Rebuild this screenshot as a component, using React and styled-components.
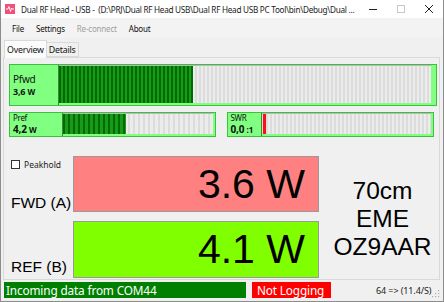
import React from "react";
import styled, { createGlobalStyle } from "styled-components";

const Global = createGlobalStyle`
  html, body { margin: 0; padding: 0; background: #f0f0f0; }
  #root { width: 444px; height: 302px; }
  * { box-sizing: border-box; }
`;

const UI = `"Noto Sans", "Open Sans", sans-serif`;
const ARIAL = `"Liberation Sans", Arial, sans-serif`;

const Window = styled.div`
  width: 444px;
  height: 302px;
  display: flex;
  flex-direction: column;
  background: #f0f0f0;
  border: 1px solid #8c8c8c;
  border-top: none;
  font-family: ${UI};
  overflow: hidden;
`;

const TitleBar = styled.div`
  height: 18px;
  flex: none;
  display: flex;
  align-items: center;
  background: #ffffff;
  padding-left: 4px;
`;

const AppIcon = styled.div`
  width: 10px;
  height: 10px;
  background: #f0507a;
  display: flex;
  align-items: center;
  justify-content: center;
  margin-right: 6px;
  flex: none;
`;

const Title = styled.div`
  flex: 1;
  min-width: 0;
  font-size: 8.2px;
  color: #1a1a1a;
  white-space: pre;
  overflow: hidden;
  letter-spacing: -0.28px;
`;

const Controls = styled.div`
  display: flex;
  align-items: center;
  flex: none;
`;

const Ctl = styled.div`
  width: 28px;
  height: 18px;
  display: flex;
  align-items: center;
  justify-content: center;
`;

const MenuBar = styled.div`
  height: 20px;
  flex: none;
  display: flex;
  align-items: center;
  background: #f3f3f3;
  padding-left: 5px;
`;

const MenuItem = styled.div`
  font-size: 8px;
  padding: 0 6px;
  color: ${(p) => (p.$disabled ? "#a0a0a0" : "#111")};
  letter-spacing: -0.2px;
`;

const Body = styled.div`
  flex: 1;
  display: flex;
  flex-direction: column;
  padding: 2px 2px 0 2px;
`;

const TabStrip = styled.div`
  display: flex;
  align-items: flex-end;
  height: 17px;
  padding-left: 1px;
  position: relative;
  z-index: 1;
`;

const Tab = styled.div`
  font-size: 8.8px;
  letter-spacing: -0.2px;
  color: #111;
  height: ${(p) => (p.$active ? "18px" : "15px")};
  padding: 0 2px;
  background: ${(p) => (p.$active ? "#fbfbfb" : "#f0f0f0")};
  border: 1px solid #d9d9d9;
  border-bottom: ${(p) => (p.$active ? "none" : "1px solid #d9d9d9")};
  margin-left: ${(p) => (p.$active ? "0" : "-1px")};
  display: flex;
  align-items: center;
  margin-bottom: ${(p) => (p.$active ? "-1px" : "0")};
`;

const TabPage = styled.div`
  height: 223px;
  border: 1px solid #d9d9d9;
  background: #f0f0f0;
  margin-right: 1px;
  padding: 6px 5px 0 5px;
  display: flex;
  flex-direction: column;
`;

const MeterFrame = styled.div`
  display: flex;
  height: ${(p) => p.$h}px;
  width: ${(p) => p.$w}px;
  background: #80ff80;
  border: 1px solid #3fbf3f;
`;

const MeterLabel = styled.div`
  width: ${(p) => p.$w}px;
  flex: none;
  display: flex;
  flex-direction: column;
  justify-content: center;
  padding-left: ${(p) => p.$pl || 3}px;
  font-family: ${UI};
  color: #111;
  border-right: 1px solid #3a8a3a;
`;

const LabelName = styled.div`
  font-size: ${(p) => p.$size}px;
  line-height: ${(p) => p.$lh}px;
  letter-spacing: -0.3px;
`;

const LabelValue = styled.div`
  font-size: ${(p) => p.$size}px;
  font-weight: bold;
  line-height: ${(p) => p.$lh}px;
  letter-spacing: -0.2px;
`;

const Unit = styled.span`
  font-size: 8px;
  font-weight: bold;
`;

const Bar = styled.div`
  flex: 1;
  display: flex;
  margin: 0 ${(p) => p.$mr}px ${(p) => p.$mb}px 0;
  border-top: 1px solid #b8b8b8;
  background: repeating-linear-gradient(
    to right,
    #dcdcdc 0,
    #dcdcdc ${(p) => p.$seg}px,
    #ececec ${(p) => p.$seg}px,
    #ececec ${(p) => p.$period}px
  );
`;

const Fill = styled.div`
  height: 100%;
  flex: none;
  background: repeating-linear-gradient(
    to right,
    #006d00 0,
    #006d00 ${(p) => p.$seg}px,
    #1a9a1a ${(p) => p.$seg}px,
    #1a9a1a ${(p) => p.$period}px
  );
`;

const Marker = styled.div`
  width: 3px;
  margin-left: 1px;
  height: 100%;
  background: #ff1010;
`;

const SmallRow = styled.div`
  display: flex;
  margin-top: 6px;
  gap: 11px;
`;

const Lower = styled.div`
  display: flex;
  margin-top: 19px;
`;

const Readings = styled.div`
  display: flex;
  flex-direction: column;
  gap: 9px;
`;

const ReadingRow = styled.div`
  display: flex;
  align-items: stretch;
`;

const LabelCell = styled.div`
  width: 64px;
  flex: none;
  display: flex;
  flex-direction: column;
  justify-content: ${(p) => (p.$top ? "space-between" : "flex-end")};
  padding-left: 2px;
`;

const Check = styled.label`
  display: flex;
  align-items: center;
  gap: 4px;
  font-size: 8.5px;
  color: #222;
  font-family: ${UI};
  margin-top: 3px;
`;

const Box = styled.span`
  width: 9px;
  height: 9px;
  border: 1px solid #333;
  background: #fff;
  flex: none;
`;

const ChannelName = styled.div`
  font-family: ${ARIAL};
  font-size: 15.5px;
  color: #000;
  margin-bottom: ${(p) => p.$mb}px;
  white-space: nowrap;
`;

const Display = styled.div`
  width: 246px;
  height: ${(p) => p.$h}px;
  background: ${(p) => p.$bg};
  border: 1px solid #9a9a9a;
  display: flex;
  align-items: center;
  justify-content: flex-end;
  padding-right: 13px;
  font-family: ${ARIAL};
  font-size: 41px;
  color: #000;
`;

const Callsign = styled.div`
  flex: 1;
  display: flex;
  flex-direction: column;
  align-items: center;
  justify-content: center;
  font-family: ${ARIAL};
  font-size: 24.5px;
  line-height: 28px;
  color: #000;
  padding-left: 12px;
  margin-top: 4px;
`;

const StatusBar = styled.div`
  height: 19px;
  flex: none;
  display: flex;
  align-items: center;
  padding: 1px 0 0 1px;
  gap: 6px;
  position: relative;
`;

const StatusPanel = styled.div`
  height: 16px;
  width: ${(p) => p.$w}px;
  flex: none;
  background: ${(p) => p.$bg};
  color: #fff;
  font-size: 11.8px;
  display: flex;
  align-items: center;
  padding-left: ${(p) => p.$pl}px;
  letter-spacing: -0.15px;
  white-space: nowrap;
`;

const Rate = styled.div`
  font-size: 9px;
  color: #222;
  margin-left: 39px;
  letter-spacing: -0.1px;
  white-space: nowrap;
  flex: none;
`;

const Grip = styled.svg`
  position: absolute;
  right: 1px;
  bottom: 1px;
`;

export default function App() {
  return (
    <>
      <Global />
      <Window>
        <TitleBar>
          <AppIcon>
            <svg width="8" height="8" viewBox="0 0 8 8">
              <path d="M0 4 L2 4 L3 1.5 L4.5 6.5 L5.5 3 L6 4 L8 4" stroke="#fff" strokeWidth="0.9" fill="none" />
            </svg>
          </AppIcon>
          <Title>{"Dual RF Head - USB -  (D:\\PRJ\\Dual RF Head USB\\Dual RF Head USB PC Tool\\bin\\Debug\\Dual ..."}</Title>
          <Controls>
            <Ctl>
              <svg width="10" height="10" viewBox="0 0 10 10"><path d="M1 5.5 H9" stroke="#222" strokeWidth="1" /></svg>
            </Ctl>
            <Ctl>
              <svg width="10" height="10" viewBox="0 0 10 10"><rect x="1.5" y="1.5" width="7" height="7" stroke="#c8c8c8" fill="none" /></svg>
            </Ctl>
            <Ctl>
              <svg width="10" height="10" viewBox="0 0 10 10"><path d="M1 1 L9 9 M9 1 L1 9" stroke="#222" strokeWidth="1" /></svg>
            </Ctl>
          </Controls>
        </TitleBar>
        <MenuBar>
          <MenuItem>File</MenuItem>
          <MenuItem>Settings</MenuItem>
          <MenuItem $disabled>Re-connect</MenuItem>
          <MenuItem>About</MenuItem>
        </MenuBar>
        <Body>
          <TabStrip>
            <Tab $active>Overview</Tab>
            <Tab>Details</Tab>
          </TabStrip>
          <TabPage>
            <MeterFrame $h={42} $w={428}>
              <MeterLabel $w={49} $pl={3}>
                <LabelName $size={10} $lh={13}>Pfwd</LabelName>
                <LabelValue $size={9} $lh={12}>3,6 <Unit>W</Unit></LabelValue>
              </MeterLabel>
              <Bar $mr={5} $mb={2} $seg={2} $period={4}>
                <Fill $seg={2} $period={4} style={{ width: 134 }} />
              </Bar>
            </MeterFrame>
            <SmallRow>
              <MeterFrame $h={25} $w={208}>
                <MeterLabel $w={53} $pl={3}>
                  <LabelName $size={8} $lh={10}>Pref</LabelName>
                  <LabelValue $size={10} $lh={12}>4,2 <Unit>W</Unit></LabelValue>
                </MeterLabel>
                <Bar $mr={2} $mb={2} $seg={2} $period={5}>
                  <Fill $seg={2} $period={5} style={{ width: 63 }} />
                </Bar>
              </MeterFrame>
              <MeterFrame $h={25} $w={209}>
                <MeterLabel $w={34} $pl={3}>
                  <LabelName $size={8} $lh={10}>SWR</LabelName>
                  <LabelValue $size={10} $lh={12}>0,0 <Unit>:1</Unit></LabelValue>
                </MeterLabel>
                <Bar $mr={2} $mb={2} $seg={2} $period={4}>
                  <Marker />
                </Bar>
              </MeterFrame>
            </SmallRow>
            <Lower>
              <Readings>
                <ReadingRow>
                  <LabelCell $top>
                    <Check><Box />Peakhold</Check>
                    <ChannelName $mb={0}>FWD (A)</ChannelName>
                  </LabelCell>
                  <Display $h={56} $bg="#ff8080">3.6 W</Display>
                </ReadingRow>
                <ReadingRow>
                  <LabelCell>
                    <ChannelName $mb={2}>REF (B)</ChannelName>
                  </LabelCell>
                  <Display $h={57} $bg="#80ff00">4.1 W</Display>
                </ReadingRow>
              </Readings>
              <Callsign>
                <div>70cm</div>
                <div>EME</div>
                <div>OZ9AAR</div>
              </Callsign>
            </Lower>
          </TabPage>
          <StatusBar>
            <StatusPanel $w={242} $bg="#008000" $pl={2}>Incoming data from COM44</StatusPanel>
            <StatusPanel $w={79} $bg="#ff0000" $pl={5}>Not Logging</StatusPanel>
            <Rate>64 =&gt; (11.4/S)</Rate>
            <Grip width="8" height="8" viewBox="0 0 8 8">
              <g fill="#b0b0b0">
                <rect x="6" y="0" width="1.2" height="1.2" />
                <rect x="3" y="3" width="1.2" height="1.2" />
                <rect x="6" y="3" width="1.2" height="1.2" />
                <rect x="0" y="6" width="1.2" height="1.2" />
                <rect x="3" y="6" width="1.2" height="1.2" />
                <rect x="6" y="6" width="1.2" height="1.2" />
              </g>
            </Grip>
          </StatusBar>
        </Body>
      </Window>
    </>
  );
}
